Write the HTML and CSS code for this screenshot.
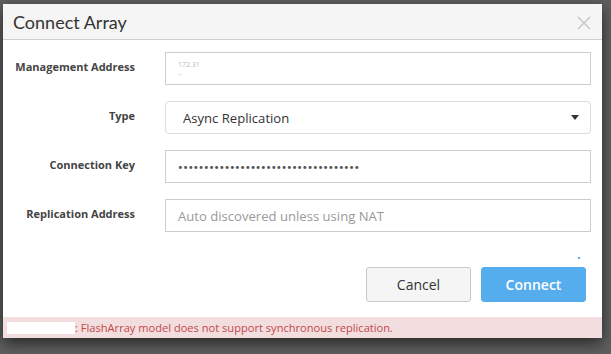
FILE: index.html
```html
<!DOCTYPE html>
<html lang="en">
  <head>
    <meta charset="UTF-8" />
    <meta name="viewport" content="width=device-width, initial-scale=1.0" />
    <title>Connect Array</title>
    <link rel="stylesheet" href="styles.css">
  </head>
  <body>
    <div class="modal">
      <div class="modal-header">
        <h3>Connect Array</h3>
        <svg class="close" width="14" height="14" viewBox="0 0 14 14">
          <path d="M1 1 L13 13 M13 1 L1 13" stroke="#c6c6c6" stroke-width="1.4" fill="none" />
        </svg>
      </div>

      <div class="modal-body">
        <div class="form-row">
          <label>Management Address</label>
          <div class="field redacted">
            <span>172.31</span>
            <span>..</span>
          </div>
        </div>
        <div class="form-row">
          <label>Type</label>
          <div class="field select">
            <span>Async Replication</span>
            <span class="caret"></span>
          </div>
        </div>
        <div class="form-row">
          <label>Connection Key</label>
          <div class="field dots">•••••••••••••••••••••••••••••••••••</div>
        </div>
        <div class="form-row">
          <label>Replication Address</label>
          <div class="field placeholder">Auto discovered unless using NAT</div>
        </div>
      </div>

      <div class="modal-footer">
        <span class="dot"></span>
        <button class="btn">Cancel</button>
        <button class="btn btn-primary">Connect</button>
      </div>

      <div class="alert">
        <span class="mask"></span>: FlashArray model does not support synchronous replication.
      </div>
    </div>
  </body>
</html>
```

FILE: styles.css
```css
body {
  font-family: "Open Sans", Arial, sans-serif;
  margin: 0;
  padding: 0;
  background-color: #5f5f5f;
  height: 354px;
  overflow: hidden;
}
.modal {
  margin: 4px 0 0 3px;
  width: 599px;
  height: 334px;
  background-color: white;
  box-shadow: 0px 5px 14px rgba(0, 0, 0, 0.6);
  display: flex;
  flex-direction: column;
}
.modal-header {
  display: flex;
  justify-content: space-between;
  align-items: center;
  height: 35px;
  background-color: #f5f5f5;
  border-bottom: 1px solid #cfcfcf;
  padding: 0 11px 0 10px;
}
.modal-header h3 {
  margin: 0;
  font-family: Lato, "Open Sans", sans-serif;
  font-size: 18px;
  font-weight: normal;
  color: #333;
}
.close {
  margin-top: 2px;
}
.modal-body {
  padding: 12px 11px 0 0;
  display: flex;
  flex-direction: column;
  gap: 16px;
}
.form-row {
  display: flex;
  gap: 30px;
}
.form-row label {
  width: 132px;
  text-align: right;
  font-size: 11px;
  font-weight: bold;
  color: #444;
  padding-top: 7px;
}
.field {
  flex: 1;
  height: 33px;
  box-sizing: border-box;
  border: 1px solid #cdcdcd;
  padding: 0 12px;
  display: flex;
  align-items: center;
  font-size: 13.1px;
  color: #333;
}
.field.redacted {
  flex-direction: column;
  align-items: flex-start;
  justify-content: center;
  font-size: 7px;
  color: #bbb;
  line-height: 8px;
}
.field.select {
  border-color: #dcdcdc;
  border-radius: 4px;
  padding-left: 17px;
  justify-content: space-between;
}
.caret {
  border-left: 4px solid transparent;
  border-right: 4px solid transparent;
  border-top: 5px solid #333;
  margin-right: -1px;
}
.field.dots {
  font-family: Lato, sans-serif;
  font-size: 8px;
  letter-spacing: 0.55px;
  color: #555;
}
.field.placeholder {
  color: #9a9a9a;
}
.modal-footer {
  display: flex;
  justify-content: flex-end;
  align-items: flex-start;
  gap: 10px;
  padding: 35px 16px 0 0;
  height: 50px;
  position: relative;
}
.dot {
  position: absolute;
  right: 22px;
  top: 25px;
  width: 2px;
  height: 2px;
  background-color: #6aa7d8;
}
.btn {
  width: 105px;
  height: 35px;
  font-family: inherit;
  font-size: 14px;
  color: #333;
  background-color: #f5f5f5;
  border: 1px solid #c8c8c8;
  border-radius: 3px;
}
.btn-primary {
  background-color: #56adee;
  border-color: #56adee;
  color: white;
  font-weight: 600;
}
.alert {
  margin-top: auto;
  height: 21px;
  background-color: #f2dedf;
  color: #c4474a;
  font-size: 11.1px;
  display: flex;
  align-items: center;
  padding-left: 4px;
}
.mask {
  display: inline-block;
  width: 68px;
  height: 12px;
  background-color: white;
}
```
